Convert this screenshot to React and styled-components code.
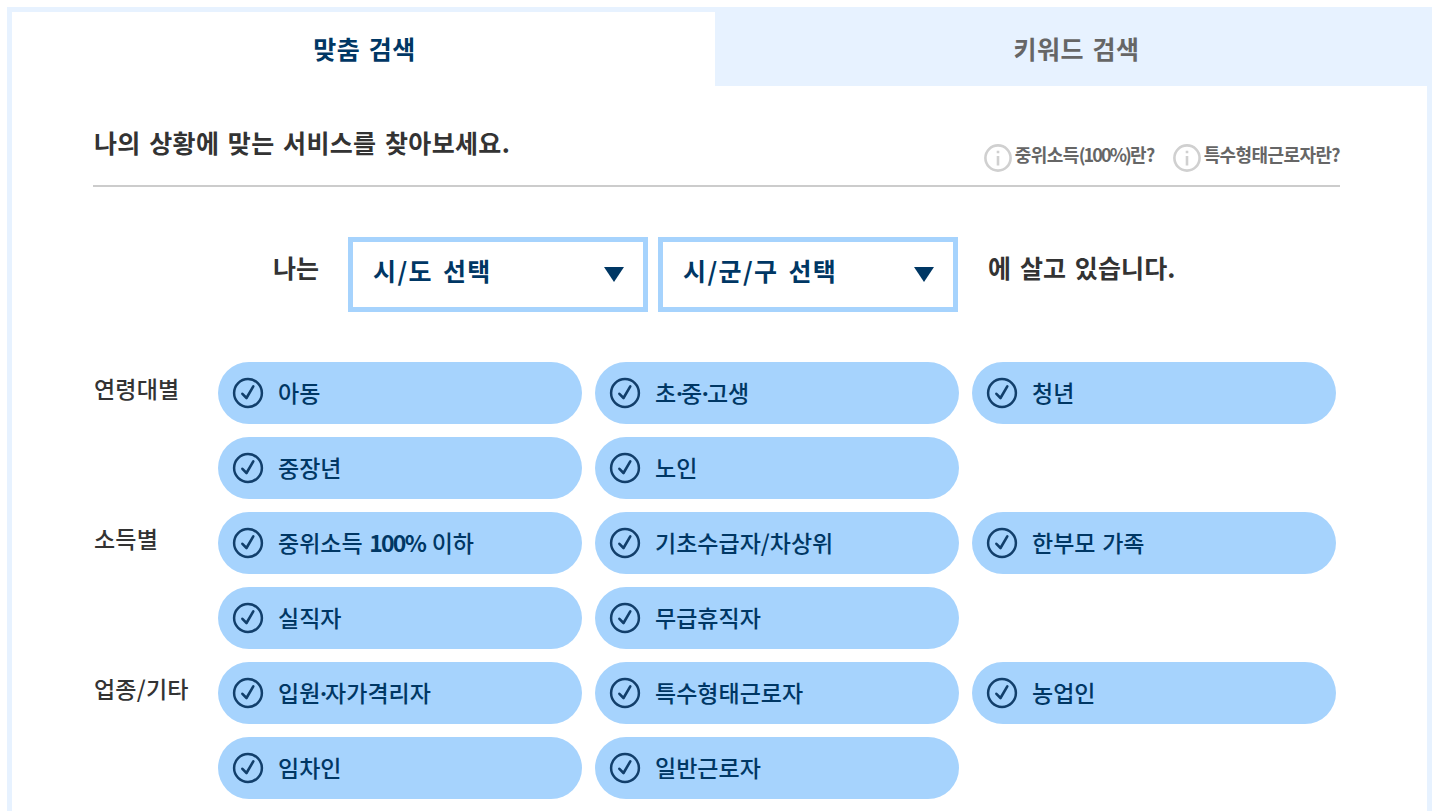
import React from "react";
import styled, { createGlobalStyle } from "styled-components";

const GlobalStyle = createGlobalStyle`
  * {
    box-sizing: border-box;
  }
  body {
    margin: 0;
    background: #fff;
    color: #333;
    font-family: "Noto Sans CJK KR", sans-serif;
  }
  button {
    margin: 0;
    padding: 0;
    border: 0;
    background: none;
    color: inherit;
    font: inherit;
    text-align: left;
  }
`;

const Page = styled.div`
  height: 811px;
  padding: 7px 6px 0 7px;
  overflow: hidden;
`;

const Panel = styled.section`
  height: 900px;
  border: 5px solid #e7f2ff;
`;

const Tabs = styled.div`
  display: flex;
  height: 74px;
`;

const Tab = styled.button`
  width: ${({ $active }) => ($active ? "703px" : "auto")};
  flex-grow: ${({ $active }) => ($active ? 0 : 1)};
  padding: 0 0 2px ${({ $active }) => ($active ? "2px" : "11px")};
  background: ${({ $active }) => ($active ? "#fff" : "#e7f2ff")};
  color: ${({ $active }) => ($active ? "#003764" : "#666")};
  font-size: 25px;
  font-weight: 700;
  line-height: 72px;
  letter-spacing: 0.5px;
  word-spacing: 2.5px;
  text-align: center;
`;

const Content = styled.div`
  padding: 0 87px 0 81px;
`;

const Heading = styled.header`
  display: flex;
  justify-content: space-between;
  height: 101px;
  border-bottom: 2px solid #ccc;
`;

const Title = styled.h2`
  margin: 0;
  padding: 37px 0 0 1px;
  font-size: 25px;
  font-weight: 700;
  line-height: 38px;
  letter-spacing: 0.35px;
  word-spacing: 2.5px;
`;

const HelpLinks = styled.div`
  display: flex;
  gap: 18px;
  padding-top: 56px;
`;

const HelpLink = styled.button`
  display: flex;
  align-items: flex-start;
  gap: 3px;
  height: 28px;
  color: #666;
  font-size: 18px;
  font-weight: 700;
  line-height: 24px;
  letter-spacing: -0.6px;
  svg {
    margin-top: 2px;
  }
`;

const Tight = styled.span`
  letter-spacing: -1.9px;
`;

const Region = styled.div`
  display: flex;
  gap: 10px;
  margin-top: 50px;
  padding-left: 180px;
  font-size: 25px;
  font-weight: 700;
`;

const RegionText = styled.span`
  width: ${({ $width }) => $width};
  padding-left: ${({ $indent }) => $indent || 0};
  line-height: 61px;
  letter-spacing: 0.1px;
  word-spacing: 3px;
  white-space: nowrap;
`;

const Select = styled.button`
  display: flex;
  align-items: center;
  justify-content: space-between;
  width: 300px;
  height: 75px;
  padding: 0 19px 10px 20px;
  border: 5px solid #a6d3fd;
  color: #003764;
  letter-spacing: 1.4px;
  word-spacing: 3px;
  svg {
    margin-top: 9px;
  }
`;

const Groups = styled.div`
  display: flex;
  flex-direction: column;
  gap: 13px;
  margin-top: 50px;
`;

const Group = styled.div`
  display: flex;
`;

const GroupLabel = styled.span`
  width: 125px;
  padding-left: 1px;
  font-size: 23px;
  font-weight: 500;
  line-height: 52px;
  letter-spacing: 0.2px;
`;

const Options = styled.div`
  display: grid;
  grid-template-columns: repeat(3, 364px);
  gap: 13px;
`;

const Option = styled.button`
  display: flex;
  align-items: center;
  gap: 14px;
  height: 62px;
  padding-left: 14px;
  border-radius: 31px;
  background: #a6d3fd;
  color: #003764;
  font-size: 23px;
  font-weight: 500;
  white-space: nowrap;
`;

const OptionText = styled.span`
  padding-bottom: 2px;
  word-spacing: 1.5px;
  b {
    font-weight: 700;
    letter-spacing: -1.8px;
  }
`;

const Dot = styled.span`
  font-family: "Open Sans", sans-serif;
  font-weight: 700;
  letter-spacing: -1.8px;
`;

const InfoIcon = () => (
  <svg width="28" height="28" viewBox="0 0 28 28" fill="none" stroke="#d0d0d0">
    <circle cx="14" cy="14" r="12.6" strokeWidth="2.6" />
    <path d="M14 12v9.5M14 6.8v2.5" strokeWidth="2.6" />
  </svg>
);

const ArrowIcon = () => (
  <svg width="20" height="15" viewBox="0 0 20 15">
    <path d="M0 0h20L10 15z" fill="#003764" />
  </svg>
);

const CheckIcon = () => (
  <svg width="32" height="32" viewBox="0 0 32 32" fill="none" stroke="#123f6b">
    <circle cx="16" cy="16" r="13.9" strokeWidth="2.5" />
    <path
      d="M10.4 16.8l4.1 4.2 6.8-11.6"
      strokeWidth="2.6"
      strokeLinecap="round"
      strokeLinejoin="round"
    />
  </svg>
);

const groups = [
  {
    label: "연령대별",
    options: [
      "아동",
      <>초<Dot>·</Dot>중<Dot>·</Dot>고생</>,
      "청년",
      "중장년",
      "노인",
    ],
  },
  {
    label: "소득별",
    options: [
      <>중위소득 <b>100%</b> 이하</>,
      "기초수급자/차상위",
      "한부모 가족",
      "실직자",
      "무급휴직자",
    ],
  },
  {
    label: "업종/기타",
    options: [
      <>입원<Dot>·</Dot>자가격리자</>,
      "특수형태근로자",
      "농업인",
      "임차인",
      "일반근로자",
    ],
  },
];

const App = () => (
  <Page>
    <GlobalStyle />
    <Panel>
      <Tabs>
        <Tab $active>맞춤 검색</Tab>
        <Tab>키워드 검색</Tab>
      </Tabs>
      <Content>
        <Heading>
          <Title>나의 상황에 맞는 서비스를 찾아보세요.</Title>
          <HelpLinks>
            <HelpLink>
              <InfoIcon />
              <span>중위소득<Tight>(100%)</Tight>란?</span>
            </HelpLink>
            <HelpLink>
              <InfoIcon />
              <span>특수형태근로자란?</span>
            </HelpLink>
          </HelpLinks>
        </Heading>
        <Region>
          <RegionText $width="65px">나는</RegionText>
          <Select>시/도 선택<ArrowIcon /></Select>
          <Select>시/군/구 선택<ArrowIcon /></Select>
          <RegionText $indent="20px">에 살고 있습니다.</RegionText>
        </Region>
        <Groups>
          {groups.map(({ label, options }) => (
            <Group key={label}>
              <GroupLabel>{label}</GroupLabel>
              <Options>
                {options.map((option, i) => (
                  <Option key={`${label}-${i}`}>
                    <CheckIcon />
                    <OptionText>{option}</OptionText>
                  </Option>
                ))}
              </Options>
            </Group>
          ))}
        </Groups>
      </Content>
    </Panel>
  </Page>
);

export default App;
